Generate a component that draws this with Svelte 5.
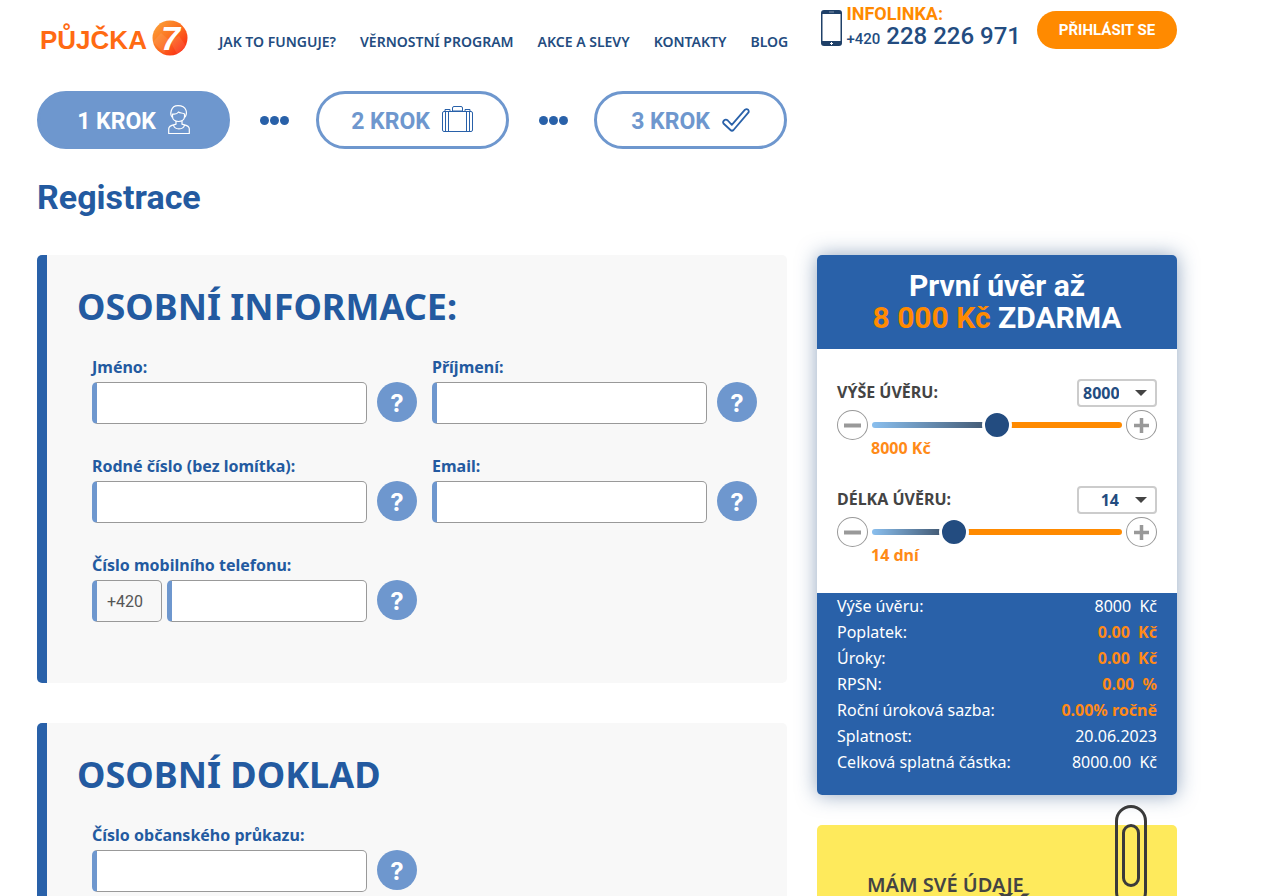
<script>
    let amount = $state(8000);
    let days = $state(14);

    const amounts = Array.from({ length: 15 }, (_, i) => (i + 1) * 1000);
    const terms = Array.from({ length: 24 }, (_, i) => i + 7);

    const menu = ['Jak to funguje?', 'Věrnostní program', 'Akce a slevy', 'Kontakty', 'Blog'];

    let sliders = $derived([
        { id: 'amount', title: 'Výše úvěru:', value: amount, min: 1000, max: 15000, step: 1000, options: amounts, note: amount + ' Kč' },
        { id: 'days', title: 'Délka úvěru:', value: days, min: 7, max: 30, step: 1, options: terms, note: days + ' dní' }
    ]);

    let summary = $derived([
        { name: 'Výše úvěru:', value: amount + '\u00a0 Kč' },
        { name: 'Poplatek:', value: '0.00\u00a0 Kč', hot: true },
        { name: 'Úroky:', value: '0.00\u00a0 Kč', hot: true },
        { name: 'RPSN:', value: '0.00\u00a0 %', hot: true },
        { name: 'Roční úroková sazba:', value: '0.00% ročně', hot: true },
        { name: 'Splatnost:', value: '20.06.2023' },
        { name: 'Celková splatná částka:', value: amount.toFixed(2) + '\u00a0 Kč' }
    ]);

    function change(slider, value) {
        const next = Math.min(slider.max, Math.max(slider.min, Number(value)));
        if (slider.id === 'amount') {
            amount = next;
        } else {
            days = next;
        }
    }

    function percent(slider) {
        return (slider.value - slider.min) / (slider.max - slider.min) * 100;
    }
</script>

{#snippet help()}
    <button type="button" class="help" aria-label="Nápověda">?</button>
{/snippet}

{#snippet field(id, label)}
    <div class="field">
        <label for={id}>{label}</label>
        <div class="field-row">
            <input class="text" type="text" {id}>
            {@render help()}
        </div>
    </div>
{/snippet}

{#snippet dots()}
    <span class="dots"><i></i><i></i><i></i></span>
{/snippet}

<div class="page">
    <header class="top">
        <a class="logo" href="#home">
            <span>PŮJČKA</span>
            <svg width="36" height="36" viewBox="0 0 36 36">
                <defs>
                    <linearGradient id="ball" x1="0" y1="0" x2="1" y2="1">
                        <stop offset="0" stop-color="#fba93c" />
                        <stop offset="0.5" stop-color="#fc6d1f" />
                        <stop offset="1" stop-color="#fb1a10" />
                    </linearGradient>
                </defs>
                <circle cx="18" cy="18" r="17.5" fill="url(#ball)" />
                <path d="M1 22l8-9 9 8-6 12zM18 21l9-5 7 10-9 8z" fill="#fff" opacity="0.09" />
                <text x="9" y="30" class="seven">7</text>
            </svg>
        </a>
        <nav>
            {#each menu as item}
                <a href="#menu">{item}</a>
            {/each}
        </nav>
        <div class="contact">
            <svg class="phone" width="21" height="36" viewBox="0 0 21 36">
                <rect width="21" height="36" rx="3" fill="#1f4068" />
                <rect x="1.5" y="4" width="18" height="27" fill="#fff" />
                <path d="M8 2h5" stroke="#8294ad" stroke-width="1" />
                <path d="M9 33.500h3M10.500 32v3" stroke="#fff" stroke-width="1" />
            </svg>
            <div class="infoline">
                <strong>INFOLINKA:</strong>
                <a href="tel:+420228226971"><small>+420</small> 228 226 971</a>
            </div>
            <button type="button" class="login">PŘIHLÁSIT SE</button>
        </div>
    </header>

    <div class="columns">
        <main>
            <div class="steps">
                <div class="step active">
                    <span>1 KROK</span>
                    <svg width="22" height="30" viewBox="0 0 22 30" fill="none" stroke="#fff" stroke-width="1.2" stroke-linejoin="round">
                        <path d="M4.500 12.500C1.500 9.500 2.500 .7 10 .7c9 0 10 7.800 6.500 11.800" />
                        <path d="M4.500 9c3 .5 5-.5 6-2 1.500 1.500 4 .5 6 2v2.500c0 3-2.500 5-6 5s-6-2-6-5z" />
                        <path d="M8 16v3.200c-3 .8-7.300 1-7.300 4.500v4.800h20.600v-4.800c0-3.500-4.300-3.700-7.300-4.500V16" />
                        <path d="M5.500 20c1 5.200 10 5.200 11 0" />
                    </svg>
                </div>
                {@render dots()}
                <div class="step">
                    <span>2 KROK</span>
                    <svg width="31" height="30" viewBox="0 0 31 30" fill="none" stroke="#2961a9" stroke-width="1">
                        <rect x="0.500" y="6.500" width="30" height="20" rx="1.500" />
                        <path d="M3.500 6.500v20M6.500 6.500v20M24.500 6.500v20M27.500 6.500v20M3 6.500v-2h5v2M23 6.500v-2h5v2" />
                        <path d="M10.500 6V3q0-1.500 1.500-1.500h7q1.500 0 1.500 1.500v3z" />
                    </svg>
                </div>
                {@render dots()}
                <div class="step">
                    <span>3 KROK</span>
                    <svg width="28" height="24" viewBox="0 0 28 24" fill="none" stroke="#2961a9" stroke-width="1.800" stroke-linejoin="round">
                        <path d="M2 12.500q1.800-1.800 3.800 0l4 4.300L23 1.700q1.700-1.200 3 0 1.300 1.500.3 3L11.500 22q-1.500 1.500-3 0L1.500 15.500q-1-1.500.5-3z" />
                    </svg>
                </div>
            </div>

            <h1>Registrace</h1>

            <section class="panel">
                <h2>OSOBNÍ INFORMACE:</h2>
                <div class="fields">
                    {@render field('name', 'Jméno:')}
                    {@render field('surname', 'Příjmení:')}
                    {@render field('birth', 'Rodné číslo (bez lomítka):')}
                    {@render field('email', 'Email:')}
                    <div class="field">
                        <label for="mobile">Číslo mobilního telefonu:</label>
                        <div class="field-row">
                            <input class="text prefix" type="text" value="+420" aria-label="Předvolba" disabled>
                            <input class="text" type="text" id="mobile">
                            {@render help()}
                        </div>
                    </div>
                </div>
            </section>

            <section class="panel">
                <h2>OSOBNÍ DOKLAD</h2>
                <div class="fields">
                    {@render field('idcard', 'Číslo občanského průkazu:')}
                </div>
            </section>
        </main>

        <aside>
            <div class="calc">
                <h3>První úvěr až<br><em>8 000 Kč</em> ZDARMA</h3>
                <div class="sliders">
                    {#each sliders as s (s.id)}
                        <div class="slider">
                            <div class="slider-head">
                                <label for={s.id}>{s.title}</label>
                                <span class="select">
                                    <select value={s.value} aria-label={s.title} onchange={(e) => change(s, e.target.value)}>
                                        {#each s.options as o}
                                            <option value={o}>{o}</option>
                                        {/each}
                                    </select>
                                </span>
                            </div>
                            <div class="slider-row">
                                <button type="button" class="round" aria-label="Méně" onclick={() => change(s, s.value - s.step)}>
                                    <svg width="17" height="17" viewBox="0 0 17 17"><path d="M0 8.500h17" stroke="#999" stroke-width="4" /></svg>
                                </button>
                                <input type="range" id={s.id} min={s.min} max={s.max} step={s.step} value={s.value}
                                    style="--pos: {percent(s)}%" oninput={(e) => change(s, e.target.value)}>
                                <button type="button" class="round" aria-label="Více" onclick={() => change(s, s.value + s.step)}>
                                    <svg width="15" height="15" viewBox="0 0 15 15"><path d="M0 7.500h15M7.500 0v15" stroke="#999" stroke-width="3.500" /></svg>
                                </button>
                            </div>
                            <div class="note">{s.note}</div>
                        </div>
                    {/each}
                </div>
                <dl>
                    {#each summary as row}
                        <div>
                            <dt>{row.name}</dt>
                            <dd class:hot={row.hot}>{row.value}</dd>
                        </div>
                    {/each}
                </dl>
            </div>

            <div class="memo">
                <svg class="clip" width="32" height="110" viewBox="0 0 32 110" fill="none" stroke="#3a3a3a" stroke-width="3">
                    <rect x="1.500" y="1.500" width="29" height="100" rx="14.500" />
                    <rect x="8.500" y="20.500" width="15" height="60" rx="7.500" />
                </svg>
                <p>MÁM SVÉ ÚDAJE <strong>V BEZPEČÍ</strong></p>
            </div>
        </aside>
    </div>
</div>

<style>
    :global(body) {
        background: #fff;
    }

    .page {
        padding: 0 97px 0 37px;
        font-family: "Noto Sans", sans-serif;
        font-size: 16px;
        color: #444;
    }
    .page :global(*) {
        box-sizing: border-box;
    }
    a {
        color: inherit;
        text-decoration: none;
    }
    button {
        cursor: pointer;
        padding: 0;
        border: 0;
    }

    .top {
        display: flex;
        align-items: flex-start;
        height: 91px;
    }
    .logo {
        display: flex;
        align-items: center;
        gap: 5px;
        padding: 20px 0 0 3px;
        font: bold 26px/32px "Liberation Sans", sans-serif;
        color: #ff6a13;
    }
    .logo span {
        padding-top: 4px;
    }
    .logo svg {
        overflow: visible;
    }
    .seven {
        font: italic bold 34px "Liberation Sans", sans-serif;
        fill: #fff;
    }
    nav {
        display: flex;
        gap: 24px;
        padding: 32px 0 0 31px;
        font-size: 14px;
        line-height: 20px;
        font-weight: 600;
        color: #234c80;
        text-transform: uppercase;
        white-space: nowrap;
    }
    .contact {
        display: flex;
        margin-left: auto;
        white-space: nowrap;
    }
    .phone {
        margin: 10px 4px 0 0;
    }
    .infoline {
        padding-top: 4px;
        font-family: Roboto, sans-serif;
        font-weight: 500;
        color: #234c80;
    }
    .infoline strong {
        display: block;
        font-size: 18px;
        line-height: 20px;
        color: #ff8a00;
    }
    .infoline a {
        display: block;
        font-size: 24px;
        line-height: 24px;
    }
    .infoline small {
        font-size: 15px;
    }
    .login {
        width: 140px;
        height: 38px;
        margin: 11px 0 0 16px;
        border-radius: 19px;
        background: #ff8a00;
        color: #fff;
        font: bold 15px Roboto, sans-serif;
    }

    .columns {
        display: grid;
        grid-template-columns: 1fr 360px;
        gap: 30px;
    }

    .steps {
        display: flex;
        justify-content: space-between;
        align-items: center;
    }
    .step {
        display: flex;
        align-items: center;
        justify-content: center;
        gap: 12px;
        width: 193px;
        height: 58px;
        border: 3px solid #6e97ce;
        border-radius: 29px;
        color: #6e97ce;
        font: bold 23px Roboto, sans-serif;
    }
    .step span {
        padding-top: 2px;
    }
    .step.active {
        background: #6e97ce;
        color: #fff;
    }
    .dots {
        display: flex;
        gap: 1px;
        margin-left: 4px;
    }
    .dots i {
        width: 9px;
        height: 9px;
        border-radius: 50%;
        background: #2961a9;
    }

    h1 {
        margin: 24px 0 34px;
        font: bold 34px/48px Roboto, sans-serif;
        color: #235aa0;
    }

    .panel {
        min-height: 428px;
        margin-bottom: 40px;
        padding: 25px 30px 0;
        border-left: 10px solid #2961a9;
        border-radius: 5px;
        background: #f8f8f8;
    }
    h2 {
        margin: 0 0 23px;
        font-size: 36px;
        line-height: 54px;
        font-weight: 700;
        color: #235aa0;
    }
    .fields {
        display: grid;
        grid-template-columns: repeat(2, minmax(0, 1fr));
        gap: 32px 15px;
        padding: 0 0 0 15px;
    }
    .field label {
        display: block;
        margin-bottom: 5px;
        line-height: 20px;
        font-weight: 700;
        color: #235aa0;
    }
    .field-row {
        display: flex;
        gap: 5px;
    }
    .text {
        flex: 1;
        min-width: 0;
        height: 42px;
        padding: 0 10px;
        border: 1px solid #999;
        border-left: 5px solid #6e97ce;
        border-radius: 5px;
        background: #fff;
        font: 16px Roboto, sans-serif;
        color: #555;
    }
    .prefix {
        flex: 0 0 70px;
        background: #f8f8f8;
    }
    .help {
        width: 40px;
        height: 40px;
        margin: 0 0 0 5px;
        padding-top: 3px;
        border-radius: 50%;
        background: #6e97ce;
        color: #fff;
        font: bold 24px Inter, sans-serif;
    }

    aside {
        padding-top: 164px;
    }
    .calc {
        border-radius: 5px;
        background: #fff;
        box-shadow: 0 0 20px rgba(35, 76, 128, 0.5);
    }
    h3 {
        margin: 0;
        padding: 15px 0;
        border-radius: 5px 5px 0 0;
        background: #2961a9;
        color: #fff;
        font: bold 30px/32px Roboto, sans-serif;
        text-align: center;
    }
    h3 em {
        font-style: normal;
        color: #ff8a00;
    }
    .sliders {
        display: grid;
        gap: 30px;
        padding: 30px 20px;
    }
    .slider-head {
        display: flex;
        justify-content: space-between;
        line-height: 26px;
        font-weight: 700;
        text-transform: uppercase;
    }
    .select {
        position: relative;
    }
    .select::after {
        content: "";
        position: absolute;
        top: 11px;
        right: 10px;
        border: 6px solid transparent;
        border-top-color: #444;
        border-bottom: 0;
        pointer-events: none;
    }
    select {
        display: block;
        appearance: none;
        width: 80px;
        height: 28px;
        padding: 0 36px 0 4px;
        border: 2px solid #ccc;
        border-radius: 4px;
        background: #fff;
        color: #234c80;
        font: 700 16px "Noto Sans", sans-serif;
        text-align-last: right;
    }
    .slider-row {
        display: flex;
        align-items: center;
        justify-content: space-between;
        padding-top: 3px;
    }
    .round {
        display: grid;
        place-items: center;
        width: 31px;
        height: 30px;
        border: 1px solid #999;
        border-radius: 50%;
        background: #fff;
    }
    input[type="range"] {
        flex: 1;
        min-width: 0;
        height: 30px;
        margin: 0 4px;
        appearance: none;
        background: none;
    }
    input[type="range"]::-webkit-slider-runnable-track {
        height: 6px;
        border-radius: 3px;
        background:
            linear-gradient(to right, #8abfee, #3c5068) left / var(--pos) 100% no-repeat,
            #ff8a00;
    }
    input[type="range"]::-webkit-slider-thumb {
        appearance: none;
        width: 30px;
        height: 30px;
        margin-top: -12px;
        border: 3px solid #fff;
        border-radius: 50%;
        background: #234c80;
    }
    .note {
        padding-left: 34px;
        line-height: 16px;
        font-weight: 700;
        color: #ff8a17;
    }

    dl {
        margin: 0;
        padding: 0 20px 20px;
        border-radius: 0 0 5px 5px;
        background: #2961a9;
        color: #fff;
        line-height: 26px;
    }
    dl div {
        display: flex;
        justify-content: space-between;
    }
    dd {
        margin: 0;
    }
    dd.hot {
        font-weight: 700;
        color: #ff8a17;
    }

    .memo {
        position: relative;
        min-height: 200px;
        margin-top: 30px;
        padding: 48px 50px;
        border-radius: 5px;
        background: #feea5c;
        color: #444;
        font-size: 20px;
        line-height: 24px;
        font-weight: 600;
    }
    .memo p {
        margin: 0;
    }
    .memo strong {
        display: block;
        font-size: 32px;
        line-height: 28px;
    }
    .clip {
        position: absolute;
        top: -20px;
        right: 30px;
    }
</style>
